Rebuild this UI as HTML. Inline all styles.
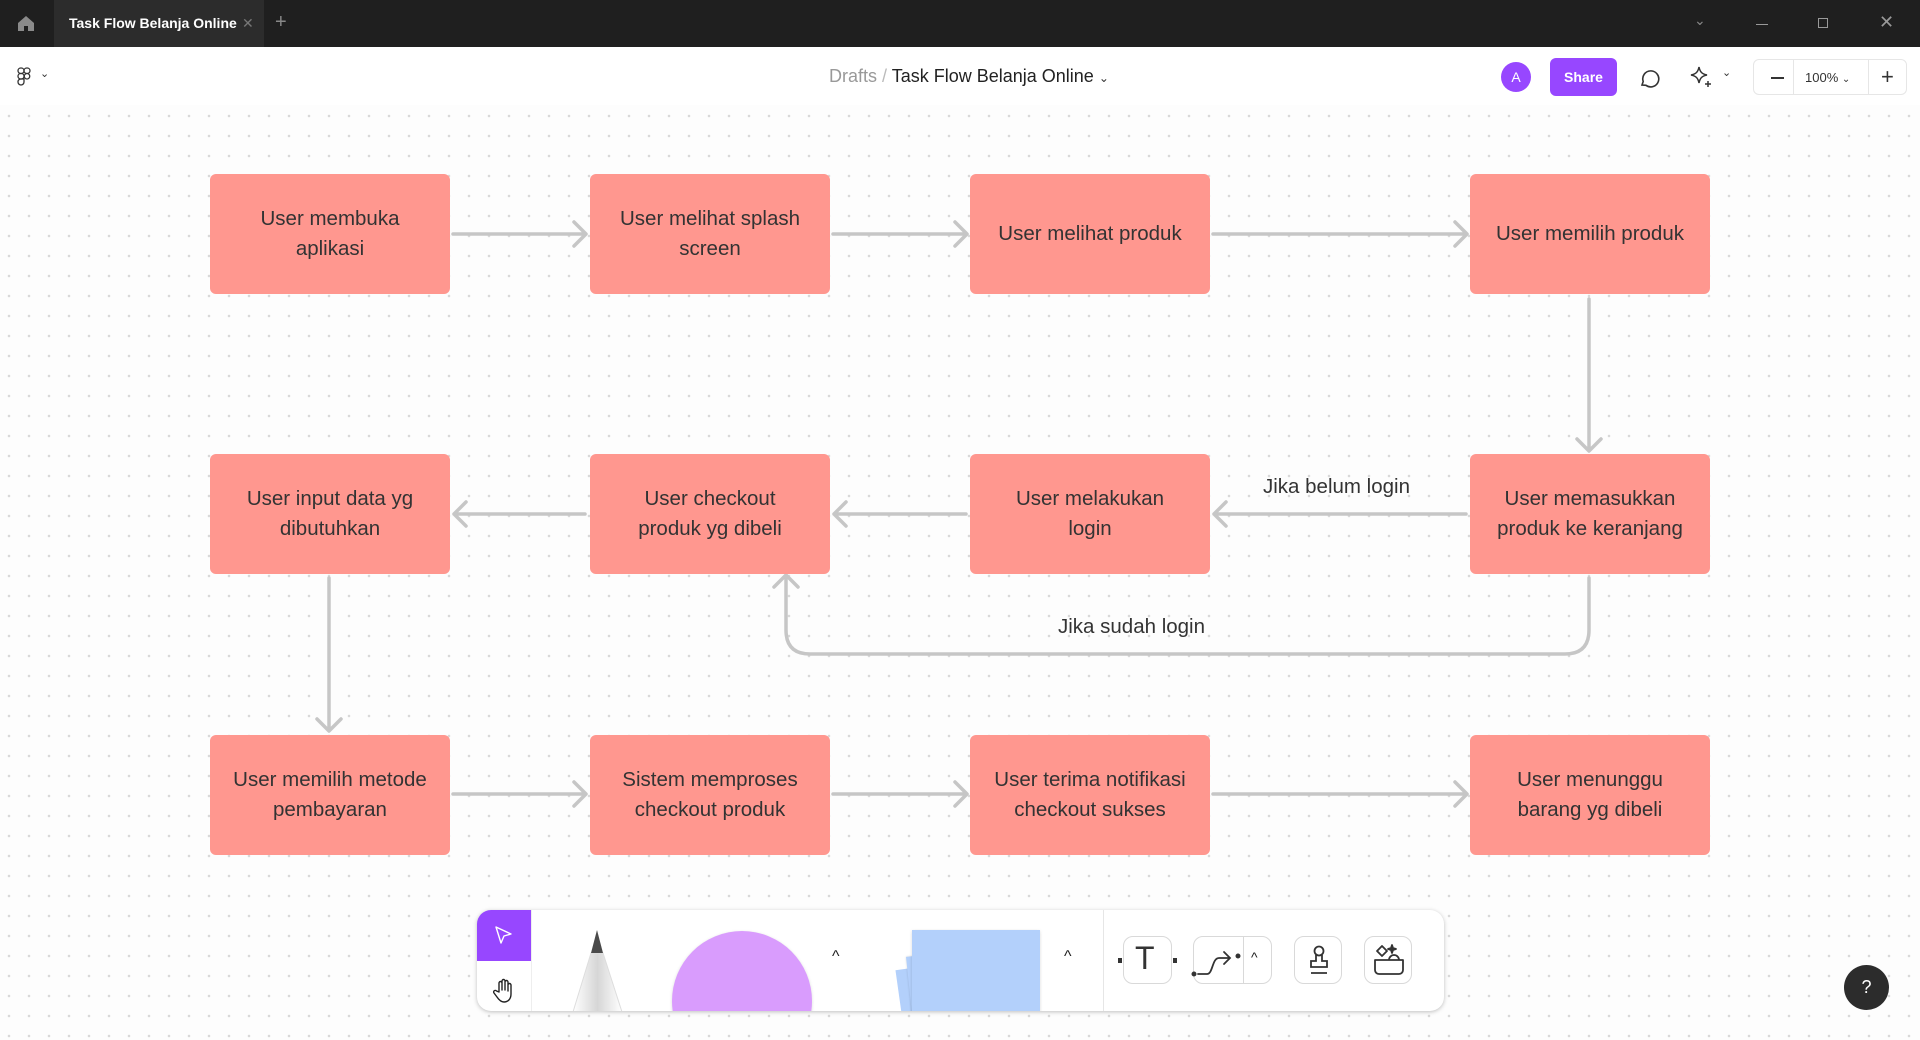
<!DOCTYPE html>
<html><head><meta charset="utf-8"><style>
*{margin:0;padding:0;box-sizing:border-box}
body{width:1920px;height:1040px;overflow:hidden;font-family:"Liberation Sans",sans-serif;background:#fdfdfd;position:relative}
.tabbar{position:absolute;left:0;top:0;width:1920px;height:47px;background:#1f1f1f}
.tab{position:absolute;left:54px;top:0;width:210px;height:47px;background:#2c2c2c;color:#fff;font-size:14px;font-weight:bold;line-height:47px;padding-left:15px}
.header{position:absolute;left:0;top:47px;width:1920px;height:58px;background:#fff}
.canvas{position:absolute;left:0;top:105px;width:1920px;height:935px;background-color:#fdfdfd;background-image:radial-gradient(circle,#d9d9d9 1.1px,transparent 1.5px);background-size:20px 20px;background-position:-1px 1px}
.box{position:absolute;width:240px;height:120px;background:#ff978f;border-radius:6px;display:flex;align-items:center;justify-content:center;text-align:center;color:#333;font-size:20.5px;line-height:30px;padding:0 6px;white-space:nowrap}
.lbl{position:absolute;font-size:20.5px;color:#333;white-space:nowrap}
.tb{position:absolute;left:477px;top:910px;width:967px;height:101px;background:#fff;border-radius:14px;box-shadow:0 1px 4px rgba(0,0,0,.25);overflow:hidden}
.btn{position:absolute;top:26px;height:48px;border:1px solid #d9d9d9;border-radius:10px;background:#fff}
</style></head><body>
<div class="tabbar">
 <svg style="position:absolute;left:17px;top:15px" width="18" height="17" viewBox="0 0 18 17"><path d="M9 1 L17 8 V16 H11 V11 H7 V16 H1 V8 Z" fill="#8a8a8a"/></svg>
 <div class="tab">Task Flow Belanja Online<span style="position:absolute;left:188px;color:#777;font-weight:normal">✕</span></div>
 <span style="position:absolute;left:275px;top:11px;color:#888;font-size:20px">+</span>
 <span style="position:absolute;left:1694px;top:12px;color:#888;font-size:14px">⌄</span>
 <div style="position:absolute;left:1756px;top:24px;width:12px;height:1px;background:#999"></div>
 <div style="position:absolute;left:1818px;top:18px;width:10px;height:10px;border:1px solid #999"></div>
 <span style="position:absolute;left:1879px;top:12px;color:#999;font-size:18px">✕</span>
</div>
<div class="header">
 <svg style="position:absolute;left:17px;top:20px" width="14" height="19" viewBox="0 0 14 19" fill="none" stroke="#333" stroke-width="1.3"><rect x="1" y="1" width="6" height="5.5" rx="2.7"/><rect x="7" y="1" width="6" height="5.5" rx="2.7"/><rect x="1" y="6.5" width="6" height="5.5" rx="2.7"/><circle cx="10" cy="9.25" r="2.75"/><path d="M1 14.7a3 2.7 0 0 1 3-2.7h3v3a3 3 0 0 1-6 0z"/></svg>
 <span style="position:absolute;left:40px;top:20px;font-size:11px;color:#333">⌄</span>
 <div style="position:absolute;left:829px;top:19px;font-size:18px;color:#999">Drafts <span style="color:#bbb">/</span> <span style="color:#222">Task Flow Belanja Online</span> <span style="color:#333;font-size:12px">⌄</span></div>
 <div style="position:absolute;left:1501px;top:15px;width:30px;height:30px;border-radius:50%;background:#9747ff;color:#fff;font-size:14px;text-align:center;line-height:30px">A</div>
 <div style="position:absolute;left:1550px;top:11px;width:67px;height:38px;border-radius:6px;background:#9747ff;color:#fff;font-size:14px;font-weight:bold;text-align:center;line-height:38px">Share</div>
 <svg style="position:absolute;left:1637px;top:19px" width="24" height="24" viewBox="0 0 24 24" fill="none" stroke="#333" stroke-width="1.6"><path d="M5 19l1.2-3.5A8 8 0 1 1 9 19.3z"/></svg>
 <svg style="position:absolute;left:1688px;top:17px" width="26" height="26" viewBox="0 0 26 26" fill="none" stroke="#333" stroke-width="1.5"><path d="M11 3c1 5 3 7 8 8-5 1-7 3-8 8-1-5-3-7-8-8 5-1 7-3 8-8z"/><path d="M20 17v6M17 20h6"/></svg>
 <span style="position:absolute;left:1722px;top:19px;font-size:11px;color:#333">⌄</span>
 <div style="position:absolute;left:1753px;top:12px;width:154px;height:36px;border:1px solid #e6e6e6;border-radius:6px">
  <div style="position:absolute;left:17px;top:17px;width:13px;height:1.5px;background:#333"></div>
  <div style="position:absolute;left:39px;top:0;width:1px;height:34px;background:#e6e6e6"></div>
  <span style="position:absolute;left:51px;top:10px;font-size:13px;color:#333">100% <span style="font-size:10px">⌄</span></span>
  <div style="position:absolute;left:114px;top:0;width:1px;height:34px;background:#e6e6e6"></div>
  <span style="position:absolute;left:127px;top:4px;font-size:22px;color:#333">+</span>
 </div>
</div>
<div class="canvas"></div>
<svg style="position:absolute;left:0;top:0" width="1920" height="1040" fill="none" stroke="#c6c6c6" stroke-width="3.5" stroke-linecap="round" stroke-linejoin="round">
 <path d="M453 234H585M574 222l12 12-12 12"/>
 <path d="M833 234H966M955 222l12 12-12 12"/>
 <path d="M1213 234H1466M1455 222l12 12-12 12"/>
 <path d="M1589 299V450M1577 439l12 12 12-12"/>
 <path d="M1466 514H1214M1226 502l-12 12 12 12"/>
 <path d="M966 514H834M846 502l-12 12 12 12"/>
 <path d="M585 514H454M466 502l-12 12 12 12"/>
 <path d="M329 578V730M317 719l12 12 12-12"/>
 <path d="M1589 578V630Q1589 654 1565 654H810Q786 654 786 630V575M774 587l12-12 12 12"/>
 <path d="M453 794H585M574 782l12 12-12 12"/>
 <path d="M833 794H966M955 782l12 12-12 12"/>
 <path d="M1213 794H1466M1455 782l12 12-12 12"/>
</svg>
<div class="box" style="left:210px;top:174px">User membuka<br>aplikasi</div>
<div class="box" style="left:590px;top:174px">User melihat splash<br>screen</div>
<div class="box" style="left:970px;top:174px">User melihat produk</div>
<div class="box" style="left:1470px;top:174px">User memilih produk</div>
<div class="box" style="left:210px;top:454px">User input data yg<br>dibutuhkan</div>
<div class="box" style="left:590px;top:454px">User checkout<br>produk yg dibeli</div>
<div class="box" style="left:970px;top:454px">User melakukan<br>login</div>
<div class="box" style="left:1470px;top:454px">User memasukkan<br>produk ke keranjang</div>
<div class="box" style="left:210px;top:735px">User memilih metode<br>pembayaran</div>
<div class="box" style="left:590px;top:735px">Sistem memproses<br>checkout produk</div>
<div class="box" style="left:970px;top:735px">User terima notifikasi<br>checkout sukses</div>
<div class="box" style="left:1470px;top:735px">User menunggu<br>barang yg dibeli</div>
<div class="lbl" style="left:1263px;top:475px">Jika belum login</div>
<div class="lbl" style="left:1058px;top:615px">Jika sudah login</div>
<div class="tb">
 <div style="position:absolute;left:0;top:0;width:54px;height:51px;background:#9747ff"></div>
 <svg style="position:absolute;left:17px;top:15px" width="20" height="20" viewBox="0 0 20 20" fill="none" stroke="#fff" stroke-width="1.4" stroke-linejoin="round"><path d="M2 2l15 7-7 2-3 7z"/></svg>
 <div style="position:absolute;left:54px;top:0;width:1px;height:101px;background:#eee"></div>
 <svg style="position:absolute;left:14px;top:68px" width="26" height="26" viewBox="0 0 26 26" fill="none" stroke="#222" stroke-width="1.4" stroke-linejoin="round"><path d="M8 14V5a1.5 1.5 0 0 1 3 0v7V3a1.5 1.5 0 0 1 3 0v9V4a1.5 1.5 0 0 1 3 0v9V7a1.5 1.5 0 0 1 3 0v9c0 5-3 8-7 8-3 0-5-2-7-5l-3-4a1.5 1.5 0 0 1 2.5-2z"/></svg>
 <svg style="position:absolute;left:90px;top:20px" width="60" height="82" viewBox="0 0 60 82"><defs><linearGradient id="g" x1="0" x2="1"><stop offset="0" stop-color="#fff"/><stop offset=".5" stop-color="#d6d6d6"/><stop offset="1" stop-color="#fff"/></linearGradient></defs><path d="M24 23L6 82H55L36 23z" fill="url(#g)" stroke="#ddd"/><path d="M30 0L24 23H36z" fill="#4a4a4a"/></svg>
 <div style="position:absolute;left:195px;top:21px;width:140px;height:140px;border-radius:50%;background:#d99cfd;box-shadow:0 1px 3px rgba(0,0,0,.15)"></div>
 <span style="position:absolute;left:355px;top:38px;font-size:16px;color:#222">^</span>
 <div style="position:absolute;left:423px;top:55px;width:70px;height:70px;background:#b3d0fb;transform:rotate(-8deg)"></div>
 <div style="position:absolute;left:433px;top:43px;width:70px;height:80px;background:#b3d0fb;transform:rotate(-6deg);box-shadow:0 0 2px rgba(0,0,0,.15)"></div>
 <div style="position:absolute;left:435px;top:20px;width:128px;height:90px;background:#b3d0fb;box-shadow:0 1px 3px rgba(0,0,0,.15)"></div>
 <span style="position:absolute;left:587px;top:38px;font-size:16px;color:#222">^</span>
 <div style="position:absolute;left:626px;top:0;width:1px;height:101px;background:#e6e6e6"></div>
 <div class="btn" style="left:646px;width:49px"><span style="position:absolute;left:11px;top:3px;font-size:32px;color:#333;font-weight:300">T</span><div style="position:absolute;left:-6px;top:21px;width:4px;height:5px;background:#333"></div><div style="position:absolute;left:49px;top:21px;width:4px;height:5px;background:#333"></div></div>
 <div class="btn" style="left:716px;width:79px"><svg style="position:absolute;left:-4px;top:6px" width="54" height="40" viewBox="0 0 54 40" fill="none" stroke="#333" stroke-width="1.8" stroke-linecap="round"><circle cx="4" cy="31" r="1.6" fill="#333"/><path d="M8 31h9c6 0 5-16 12-16h10M34 9l6 6-6 6"/><circle cx="48" cy="13" r="1.6" fill="#333"/></svg><div style="position:absolute;left:49px;top:0;width:1px;height:46px;background:#d9d9d9"></div><span style="position:absolute;left:57px;top:12px;font-size:14px;color:#222">^</span></div>
 <div class="btn" style="left:817px;width:48px"><svg style="position:absolute;left:12px;top:8px" width="24" height="32" viewBox="0 0 24 32" fill="none" stroke="#333" stroke-width="1.8"><circle cx="12" cy="6" r="4.5"/><path d="M9 10v6H4v6h16v-6h-5v-6M4 28h16"/></svg></div>
 <div class="btn" style="left:887px;width:48px"><svg style="position:absolute;left:6px;top:5px" width="36" height="36" viewBox="0 0 36 36" fill="none" stroke="#333" stroke-width="1.8" stroke-linejoin="round"><path d="M11 4l5 5-5 5-5-5z"/><path d="M21 3l1 3 3 1-3 1-1 3-1-3-3-1 3-1z" fill="#333"/><path d="M4 18h28v10a4 4 0 0 1-4 4H8a4 4 0 0 1-4-4z"/><path d="M18 18a5 5 0 0 1 10 0"/></svg></div>
</div>
<div style="position:absolute;left:1844px;top:965px;width:45px;height:45px;border-radius:50%;background:#2c2c2c;color:#fff;text-align:center;line-height:45px;font-size:18px">?</div>
</body></html>
